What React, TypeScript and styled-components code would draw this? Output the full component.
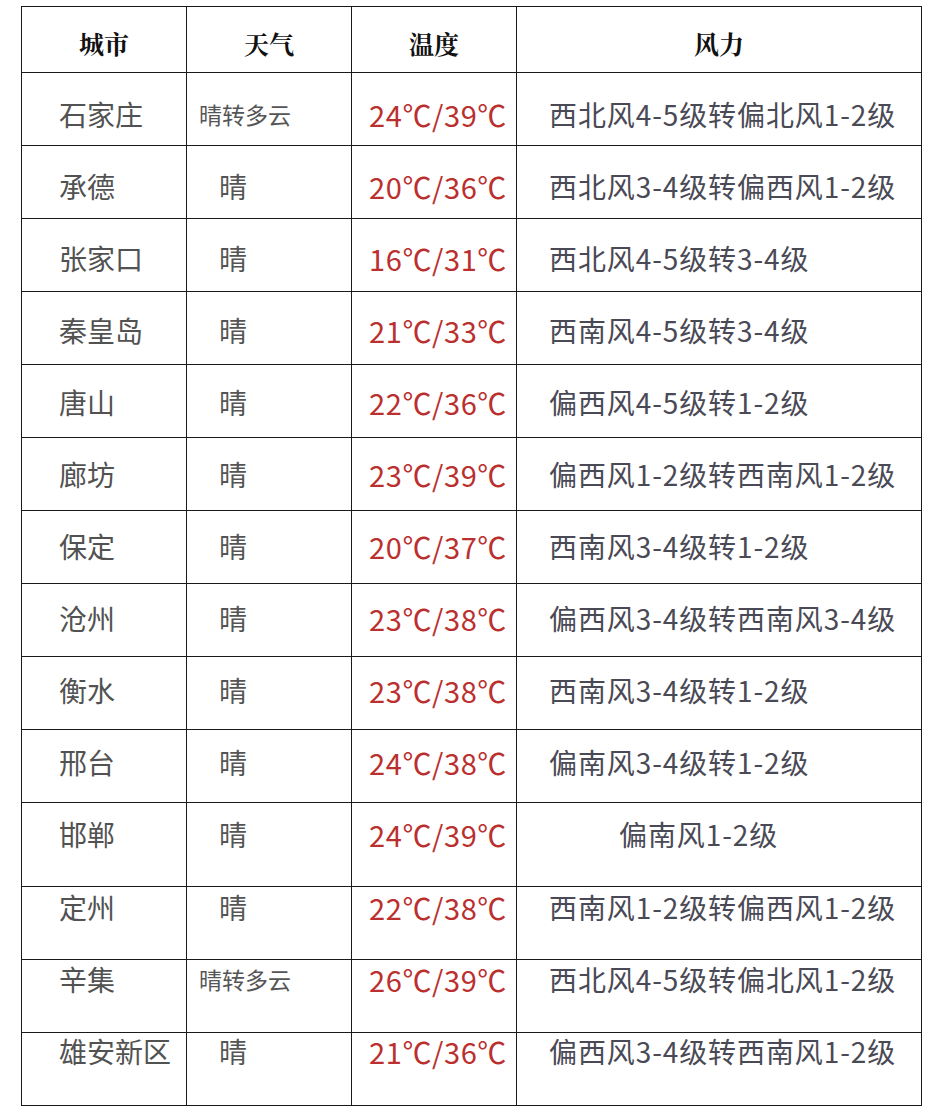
import styled, { createGlobalStyle } from "styled-components";

interface IRow {
  city: string;
  weather: string;
  temp: string;
  wind: string;
  windIndent?: number;
  height: number;
  mid: number; // text centre, measured from the row top
}

const ROWS: IRow[] = [
  { city: "石家庄", weather: "晴转多云", temp: "24℃/39℃", wind: "西北风4-5级转偏北风1-2级", height: 73, mid: 41 },
  { city: "承德", weather: "晴", temp: "20℃/36℃", wind: "西北风3-4级转偏西风1-2级", height: 73, mid: 40 },
  { city: "张家口", weather: "晴", temp: "16℃/31℃", wind: "西北风4-5级转3-4级", height: 73, mid: 39 },
  { city: "秦皇岛", weather: "晴", temp: "21℃/33℃", wind: "西南风4-5级转3-4级", height: 73, mid: 38 },
  { city: "唐山", weather: "晴", temp: "22℃/36℃", wind: "偏西风4-5级转1-2级", height: 73, mid: 37 },
  { city: "廊坊", weather: "晴", temp: "23℃/39℃", wind: "偏西风1-2级转西南风1-2级", height: 73, mid: 36 },
  { city: "保定", weather: "晴", temp: "20℃/37℃", wind: "西南风3-4级转1-2级", height: 73, mid: 35 },
  { city: "沧州", weather: "晴", temp: "23℃/38℃", wind: "偏西风3-4级转西南风3-4级", height: 73, mid: 34 },
  { city: "衡水", weather: "晴", temp: "23℃/38℃", wind: "西南风3-4级转1-2级", height: 73, mid: 33 },
  { city: "邢台", weather: "晴", temp: "24℃/38℃", wind: "偏南风3-4级转1-2级", height: 73, mid: 32 },
  { city: "邯郸", weather: "晴", temp: "24℃/39℃", wind: "偏南风1-2级", windIndent: 102, height: 84, mid: 31 },
  { city: "定州", weather: "晴", temp: "22℃/38℃", wind: "西南风1-2级转偏西风1-2级", height: 73, mid: 20 },
  { city: "辛集", weather: "晴转多云", temp: "26℃/39℃", wind: "西北风4-5级转偏北风1-2级", height: 73, mid: 19 },
  { city: "雄安新区", weather: "晴", temp: "21℃/36℃", wind: "偏西风3-4级转西南风1-2级", height: 73, mid: 18 },
];

const LINE = 36;

const GlobalStyle = createGlobalStyle`
  body {
    margin: 0;
    background: #ffffff;
    font-family: "Noto Sans CJK SC", "Noto Sans", sans-serif;
  }
`;

const Page = styled.div`
  width: 941px;
  height: 1112px;
  padding: 6px 0 0 21px;
  box-sizing: border-box;
  background: #fff;
`;

const Table = styled.div`
  width: 901px;
  border-top: 1px solid #1a1a1a;
  border-left: 1px solid #1a1a1a;
  box-sizing: border-box;
`;

const Row = styled.div<{ $h: number; $mid: number }>`
  display: grid;
  grid-template-columns: 165px 165px 165px 405px;
  height: ${(p) => p.$h}px;

  & > div {
    padding-top: ${(p) => p.$mid - LINE / 2}px;
  }
`;

const Cell = styled.div<{ $indent?: number; $center?: boolean }>`
  box-sizing: border-box;
  border-right: 1px solid #1a1a1a;
  border-bottom: 1px solid #1a1a1a;
  padding-left: ${(p) => p.$indent ?? 0}px;
  text-align: ${(p) => (p.$center ? "center" : "left")};
  line-height: ${LINE}px;
  white-space: nowrap;
`;

const HeadText = styled.span`
  font-family: "Noto Serif CJK SC", "Liberation Serif", "Noto Sans CJK SC", serif;
  font-weight: 700;
  font-size: 25px;
  color: #111;
`;

const City = styled.span`
  font-size: 28px;
  color: #525252;
`;

const Weather = styled.span<{ $small: boolean }>`
  font-size: ${(p) => (p.$small ? 23 : 28)}px;
  color: #555;
`;

const Temp = styled.span`
  font-size: 29px;
  letter-spacing: 0.6px;
  color: #bb2f2f;
`;

const Wind = styled.span`
  font-size: 28px;
  letter-spacing: 0.9px;
  color: #4a4a56;
`;

export default function App() {
  return (
    <>
      <GlobalStyle />
      <Page>
        <Table>
          <Row $h={66} $mid={36}>
            <Cell $center>
              <HeadText>城市</HeadText>
            </Cell>
            <Cell $center>
              <HeadText>天气</HeadText>
            </Cell>
            <Cell $center>
              <HeadText>温度</HeadText>
            </Cell>
            <Cell $center>
              <HeadText>风力</HeadText>
            </Cell>
          </Row>
          {ROWS.map((r) => {
            const small = r.weather.length > 1;
            return (
              <Row key={r.city} $h={r.height} $mid={r.mid}>
                <Cell $indent={37}>
                  <City>{r.city}</City>
                </Cell>
                <Cell $indent={small ? 12 : 32}>
                  <Weather $small={small}>{r.weather}</Weather>
                </Cell>
                <Cell $indent={17}>
                  <Temp>{r.temp}</Temp>
                </Cell>
                <Cell $indent={r.windIndent ?? 32}>
                  <Wind>{r.wind}</Wind>
                </Cell>
              </Row>
            );
          })}
        </Table>
      </Page>
    </>
  );
}
